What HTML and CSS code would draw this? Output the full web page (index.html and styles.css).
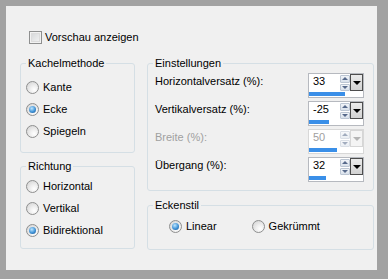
FILE: index.html
```html
<!DOCTYPE html>
<html lang="de">
  <head>
    <meta charset="UTF-8" />
    <meta name="viewport" content="width=device-width, initial-scale=1.0" />
    <title>Kacheln</title>
    <link rel="stylesheet" href="styles.css">
  </head>
  <body>
    <div class="dialog">
      <label class="check-row"><span class="checkbox"></span>Vorschau anzeigen</label>

      <div class="columns">
        <div class="col-left">
          <fieldset class="group group-tiling">
            <legend>Kachelmethode</legend>
            <div class="option"><span class="radio"></span>Kante</div>
            <div class="option"><span class="radio on"></span>Ecke</div>
            <div class="option"><span class="radio"></span>Spiegeln</div>
          </fieldset>

          <fieldset class="group group-direction">
            <legend>Richtung</legend>
            <div class="option"><span class="radio"></span>Horizontal</div>
            <div class="option"><span class="radio"></span>Vertikal</div>
            <div class="option"><span class="radio on"></span>Bidirektional</div>
          </fieldset>
        </div>

        <div class="col-right">
          <fieldset class="group group-settings">
            <legend>Einstellungen</legend>
            <div class="settings-list">
              <div class="setting">
                <span class="setting-label">Horizontalversatz (%):</span>
                <div class="spin">
                  <div class="spin-top">
                    <span class="spin-value">33</span>
                    <span class="spin-arrows"><span class="arrow up"></span><span class="arrow down"></span></span>
                    <span class="spin-drop"></span>
                  </div>
                  <div class="spin-track"><div class="spin-bar" style="width: 36px"></div></div>
                </div>
              </div>
              <div class="setting">
                <span class="setting-label">Vertikalversatz (%):</span>
                <div class="spin">
                  <div class="spin-top">
                    <span class="spin-value">-25</span>
                    <span class="spin-arrows"><span class="arrow up"></span><span class="arrow down"></span></span>
                    <span class="spin-drop"></span>
                  </div>
                  <div class="spin-track"><div class="spin-bar" style="width: 20px"></div></div>
                </div>
              </div>
              <div class="setting disabled">
                <span class="setting-label">Breite (%):</span>
                <div class="spin">
                  <div class="spin-top">
                    <span class="spin-value">50</span>
                    <span class="spin-arrows"><span class="arrow up"></span><span class="arrow down"></span></span>
                    <span class="spin-drop"></span>
                  </div>
                  <div class="spin-track"><div class="spin-bar" style="width: 28px"></div></div>
                </div>
              </div>
              <div class="setting">
                <span class="setting-label">Übergang (%):</span>
                <div class="spin">
                  <div class="spin-top">
                    <span class="spin-value">32</span>
                    <span class="spin-arrows"><span class="arrow up"></span><span class="arrow down"></span></span>
                    <span class="spin-drop"></span>
                  </div>
                  <div class="spin-track"><div class="spin-bar" style="width: 17px"></div></div>
                </div>
              </div>
            </div>
          </fieldset>

          <fieldset class="group group-corner">
            <legend>Eckenstil</legend>
            <div class="corner-options">
              <div class="option"><span class="radio on"></span>Linear</div>
              <div class="option"><span class="radio"></span>Gekrümmt</div>
            </div>
          </fieldset>
        </div>
      </div>
    </div>
  </body>
</html>
```

FILE: styles.css
```css
body {
  margin: 0;
  background-color: #a2a2a2;
  font-family: "Liberation Sans", Arial, sans-serif;
  font-size: 11px;
  color: #000;
}

/* The dialog surface */
.dialog {
  width: 371px;
  height: 264px;
  margin: 6px;
  padding: 25px 0 0 14px;
  box-sizing: border-box;
  background: #f0f0f0;
}

.check-row {
  display: flex;
  align-items: center;
  gap: 3px;
  height: 13px;
  margin-left: 9px;
  line-height: 13px;
}

.checkbox {
  width: 13px;
  height: 13px;
  box-sizing: border-box;
  border: 1px solid #8e8f8f;
  background: linear-gradient(135deg, #d2d4d6, #f6f6f6);
  box-shadow: inset 0 0 0 1px #f2f2f2, inset 0 0 0 2px #dcdcdc;
}

.columns {
  display: flex;
  gap: 12px;
  margin-top: 13px;
}

.col-left {
  width: 115px;
}

.col-right {
  width: 227px;
}

/* Group boxes */
.group {
  margin: 0;
  min-width: 0;
  padding: 0 5px;
  border: 1px solid #d5dfe5;
  border-radius: 3px;
}

.group legend {
  padding: 0 2px;
  line-height: 13px;
}

.group-tiling {
  padding-top: 6px;
  padding-bottom: 10px;
}

.group-direction {
  margin-top: 7px;
  padding-top: 2px;
  padding-bottom: 7px;
}

.group-settings {
  padding-top: 3px;
  padding-bottom: 8px;
}

.group-corner {
  margin-top: 8px;
  padding-top: 3px;
  padding-bottom: 12px;
}

/* Radio options */
.option {
  display: flex;
  align-items: center;
  gap: 4px;
  height: 22px;
}

.radio {
  position: relative;
  width: 13px;
  height: 13px;
  box-sizing: border-box;
  border: 1px solid #8e8f8f;
  border-radius: 50%;
  background: radial-gradient(circle at 65% 70%, #ffffff, #f0f0f0 35%, #cfcfcf);
}

.radio.on::after {
  content: "";
  position: absolute;
  left: 2px;
  top: 2px;
  width: 7px;
  height: 7px;
  border-radius: 50%;
  background: radial-gradient(circle at 40% 35%, #bde6ff, #3f92d6 55%, #134c86);
}

.corner-options {
  display: flex;
  gap: 35px;
  padding-left: 16px;
}

/* Settings rows with spin boxes */
.settings-list {
  display: flex;
  flex-direction: column;
  gap: 3px;
}

.setting {
  display: flex;
  justify-content: space-between;
  padding: 0 4px 0 2px;
}

.setting-label {
  line-height: 17px;
}

.spin {
  display: flex;
  flex-direction: column;
  width: 56px;
  height: 25px;
  box-sizing: border-box;
  border: 1px solid #b6b9bf;
  background: #fff;
}

.spin-top {
  display: flex;
  height: 18px;
}

.spin-value {
  flex: 1;
  padding-left: 4px;
  line-height: 14px;
}

.spin-arrows {
  display: flex;
  flex-direction: column;
  gap: 1px;
  width: 10px;
  padding: 1px 0;
  box-sizing: border-box;
}

.arrow {
  flex: 1;
  display: flex;
  align-items: center;
  justify-content: center;
  border: 1px solid #bcc6d3;
  border-radius: 1px;
  background: linear-gradient(#f1f4f8, #d9e1eb);
}

.arrow::after {
  content: "";
  border-left: 3px solid transparent;
  border-right: 3px solid transparent;
}

.arrow.up::after {
  border-bottom: 3px solid #56698a;
}

.arrow.down::after {
  border-top: 3px solid #56698a;
}

.spin-drop {
  display: flex;
  align-items: center;
  justify-content: center;
  width: 13px;
  height: 17px;
  box-sizing: border-box;
  border: 1px solid #4d4d4d;
  background: linear-gradient(#ebebeb, #d2d2d2);
}

.spin-drop::after {
  content: "";
  border-left: 4px solid transparent;
  border-right: 4px solid transparent;
  border-top: 4px solid #000;
}

.spin-track {
  height: 4px;
  margin-top: auto;
  margin-bottom: 1px;
}

.spin-bar {
  height: 100%;
  background: #3a8fe8;
}

/* Disabled row */
.setting.disabled .setting-label,
.setting.disabled .spin-value {
  color: #a0a0a0;
}

.setting.disabled .spin {
  border-color: #d8d8d8;
}

.setting.disabled .arrow {
  opacity: 0.55;
}

.setting.disabled .spin-drop {
  border-color: #d6d6d6;
  background: #f4f4f4;
}

.setting.disabled .spin-drop::after {
  border-top-color: #b4b4b4;
}
```
